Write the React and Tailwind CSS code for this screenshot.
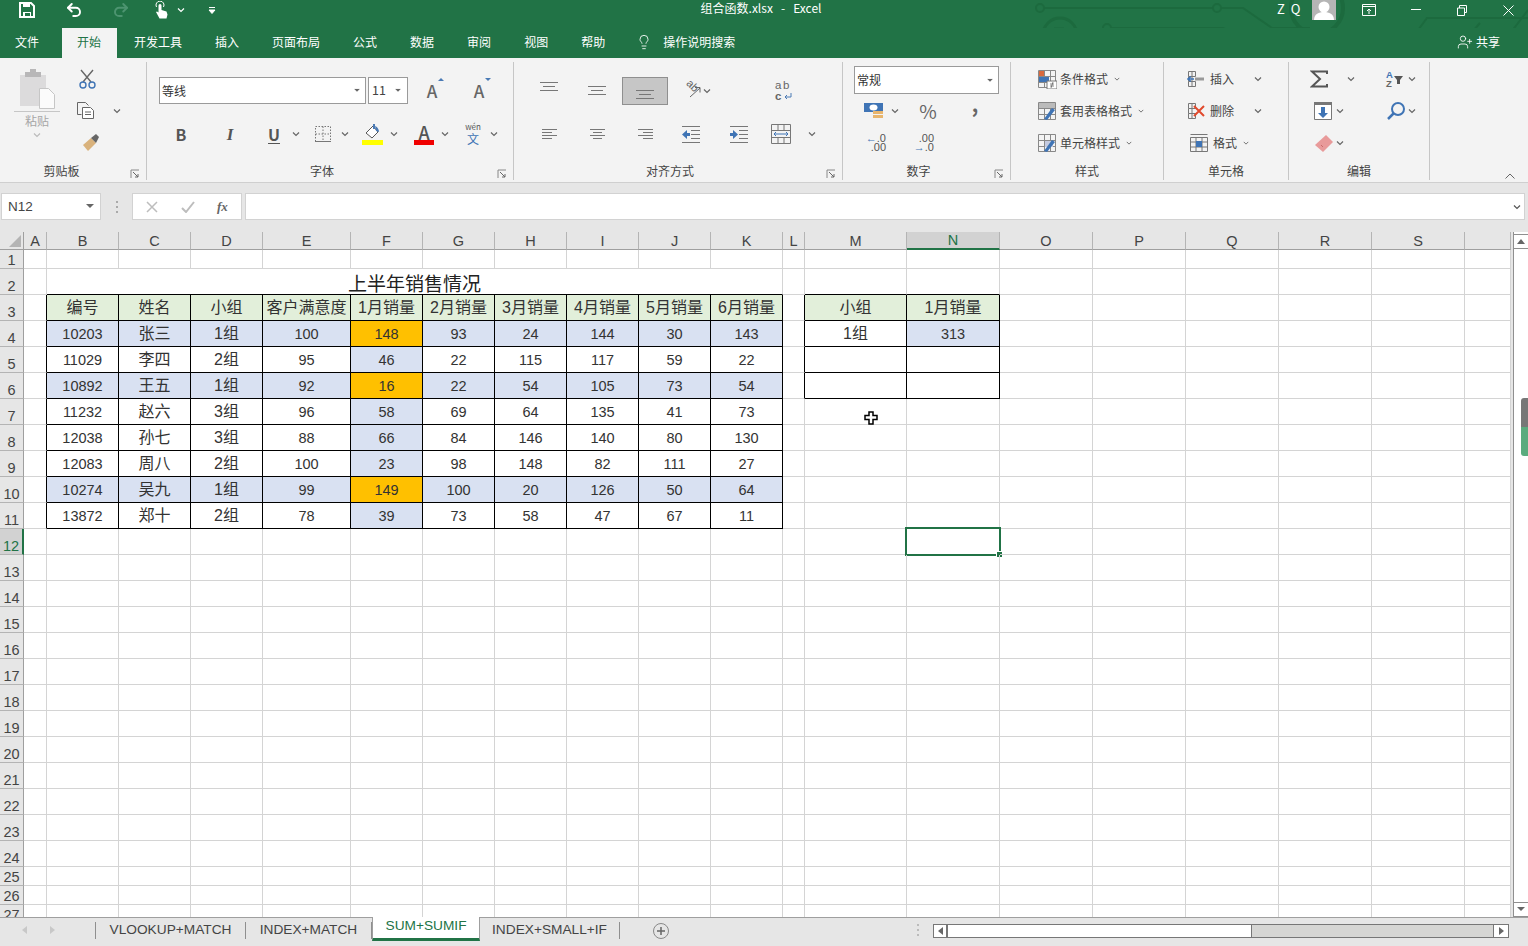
import React from 'react'
import { Undo2, Redo2, Lightbulb, UserPlus } from 'lucide-react'

const S = ({ w = 20, h = 20, className = '', children }) => (
  <svg width={w} height={h} viewBox={`0 0 ${w} ${h}`} fill="none" className={`shrink-0 ${className}`}>
    {children}
  </svg>
)

const Chev = ({ className = '', color = '#666' }) => (
  <S w={8} h={6} className={className}>
    <path d="M1 1.5 4 4.5 7 1.5" stroke={color} strokeWidth="1.2" />
  </S>
)

const Launcher = () => (
  <S w={10} h={10}>
    <path d="M1 9V1h8" stroke="#888" />
    <path d="M3 3l5 5M5 8h3V5" stroke="#666" />
  </S>
)

const Caret = ({ className = '' }) => (
  <S w={8} h={5} className={className}>
    <path d="M0 0h8L4 4z" fill="#666" />
  </S>
)

const Group = ({ width, label, launcher, children }) => (
  <div className="flex flex-col shrink-0 h-[118px] mt-[4px] border-r border-[#c6c6c6]" style={{ width }}>
    <div className="flex-1 min-h-0">{children}</div>
    <div className="flex h-[18px] items-center text-[12px] leading-none text-[#444]">
      <div className="flex-1 text-center">{label}</div>
      {launcher ? (
        <div className="w-[16px] pt-[6px]">
          <Launcher />
        </div>
      ) : null}
    </div>
  </div>
)

const Row32 = ({ children }) => <div className="flex items-center h-[32px]">{children}</div>

const AlignV = ({ y }) => (
  <S w={18} h={28}>
    <path d={`M0 ${y}.5h18M3 ${y + 4}.5h12M0 ${y + 8}.5h18`} stroke="#777" />
  </S>
)

const AlignH = ({ kind }) => {
  const d =
    kind === 'left'
      ? 'M0 1.5h15M0 4.5h10M0 7.5h15M0 10.5h10'
      : kind === 'center'
        ? 'M0 1.5h15M3 4.5h9M0 7.5h15M3 10.5h9'
        : 'M0 1.5h15M5 4.5h10M0 7.5h15M5 10.5h10'
  return (
    <S w={15} h={12}>
      <path d={d} stroke="#777" />
    </S>
  )
}

const TableIcon = ({ children }) => (
  <S w={20} h={20}>
    <path d="M1.5 1.5h17v17h-17zM1.5 7.5h17M1.5 13.5h17M7.5 1.5v17M13.5 1.5v17" stroke="#888" />
    {children}
  </S>
)

const Cuts = () => (
  <S w={18} h={18}>
    <path d="M1.5 1.5h7v5h-7zM1.5 6.5v5h7M1.5 11.5v5h7v-5M5 1.5v15" stroke="#777" />
    <path d="M8 9h9" stroke="#999" strokeWidth="3" />
    <path d="M1 9h6M4 6.500L1 9l3 2.500" stroke="#3f74b5" strokeWidth="1.500" />
  </S>
)

const Circuit = () => (
  <svg width="518" height="58" viewBox="0 0 518 58" fill="none" className="absolute left-[1010px] top-0" stroke="#1c6a3e" strokeWidth="2">
    <path d="M34 8H203M211 8H233L262 28H300" />
    <circle cx="30" cy="8" r="4" />
    <circle cx="207" cy="8" r="4" />
    <path d="M101 28H213L232 37" />
    <circle cx="97" cy="28" r="4" />
    <circle cx="236" cy="37" r="4" />
    <path d="M16 56H123L143 38H232M240 38H262L280 45H397L417 18H518" />
    <circle cx="50" cy="35" r="17" strokeWidth="3" />
    <path d="M44 29h10M44 29v10M44 29l13 13" strokeWidth="3" />
    <circle cx="307" cy="8" r="26" strokeWidth="4" />
    <path d="M482 57L518 10M440 57l30-34" />
  </svg>
)

const TitleBar = () => (
  <div className="relative flex h-[28px] shrink-0 bg-[#217346] text-white">
    <Circuit />
    <div className="relative flex w-full h-[20px] items-center">
      <S w={16} h={16} className="ml-[19px]">
        <path d="M1 1h11l3 3v11H1z" stroke="#fff" strokeWidth="2" />
        <path d="M4 1h7v4H4zM4 10h8v5H4z" fill="#fff" />
        <path d="M6 11h5v3H6z" fill="#217346" />
      </S>
      <Undo2 size={18} strokeWidth={2.6} className="ml-[30px] shrink-0" />
      <Redo2 size={18} strokeWidth={2.6} color="#4d9470" className="ml-[29px] shrink-0" />
      <S w={14} h={18} className="ml-[25px]">
        <path d="M1.500 6a4 4 0 1 1 7 0" stroke="#fff" />
        <path d="M3.500 4.500a1.500 1.500 0 0 1 3 0V9l5 1.500 1 3-1 4H4.500L1 11l1 -.5 1.500 1z" fill="#fff" />
      </S>
      <Chev color="#fff" className="ml-[8px]" />
      <S w={8} h={8} className="ml-[23px]">
        <path d="M1 1.5h6M1 4h6L4 7.5z" stroke="#fff" fill="#fff" strokeWidth="1" />
      </S>
      <div className="ml-[475px] w-[140px] text-center text-[12px] leading-none whitespace-pre pb-[4px]">组合函数.xlsx   -   Excel</div>
      <div className="ml-[446px] text-[13px] tracking-[1.500px] leading-none pb-[4px]">Z Q</div>
      <div className="ml-[10px] w-[24px] h-[20px] bg-[#b5b5b5] overflow-hidden flex justify-center">
        <S w={24} h={20}>
          <circle cx="12" cy="7" r="5.5" fill="#fff" />
          <path d="M2 20c0-6 5-8 10-8s10 2 10 8z" fill="#fff" />
        </S>
      </div>
      <S w={14} h={12} className="ml-[26px]">
        <path d="M.5.5h13v11H.5zM.5 2.5h13" stroke="#fff" />
        <path d="M7 10V5M5 7l2-2 2 2" stroke="#fff" />
      </S>
      <S w={10} h={2} className="ml-[35px]">
        <path d="M0 .5h10" stroke="#fff" />
      </S>
      <S w={10} h={11} className="ml-[36px]">
        <path d="M.5 3h7v7.5h-7zM2.5 3V.5h7v7H7.5" stroke="#fff" />
      </S>
      <S w={11} h={11} className="ml-[36px]">
        <path d="M.5.5l10 10M10.5.5l-10 10" stroke="#fff" />
      </S>
    </div>
  </div>
)

const tabNames = ['开发工具', '插入', '页面布局', '公式', '数据', '审阅', '视图', '帮助']

const TabBar = () => (
  <div className="relative flex h-[30px] shrink-0 items-stretch bg-[#217346] text-white text-[12px]">
    <div className="flex items-center pl-[15px] pr-[21.500px] pb-[2px]">文件</div>
    <div className="flex items-center mx-[1px] px-[15.5px] pb-[2px] bg-[#f3f3f3] text-[#217346]">开始</div>
    {tabNames.map(t => (
      <div key={t} className="flex items-center mx-[1px] px-[15.5px] pb-[2px]">
        {t}
      </div>
    ))}
    <Lightbulb size={16} strokeWidth={1.3} className="ml-[14.500px] self-center shrink-0 mb-[2px]" />
    <div className="flex items-center ml-[11px] pb-[2px]">操作说明搜索</div>
    <div className="flex items-center ml-auto mr-[28px] pb-[2px]">
      <UserPlus size={16} strokeWidth={1.3} className="mr-[3px]" />
      共享
    </div>
  </div>
)

const ClipboardGroup = () => (
  <Group width={147} label={<span className="pr-[7px]">剪贴板</span>} launcher>
    <div className="flex">
      <div className="ml-[14px] mt-[6px] w-[46px] flex flex-col items-center">
        <S w={36} h={41}>
          <path d="M1 7h26v31H1z" fill="#dcdbdc" />
          <path d="M6 4h16v5H6zM11 1h6v4h-6z" fill="#b8b7b8" />
          <path d="M20.5 20.5h9l6 6v14h-15z" fill="#fbfbfb" stroke="#c6c6c6" />
        </S>
        <div className="w-full mt-[2px] border-t border-[#c6c6c6] text-center text-[12px] leading-none pt-[3px] text-[#a6a6a6]">粘贴</div>
        <Chev color="#bbb" className="mt-[5px]" />
      </div>
      <div className="ml-[18px] mt-[1px]">
        <Row32>
          <S w={20} h={20}>
            <path d="M3 1l10 12M15 1L5 13" stroke="#666" strokeWidth="1.4" />
            <circle cx="5" cy="16" r="3" stroke="#3f74b5" strokeWidth="1.4" />
            <circle cx="14" cy="16" r="3" stroke="#3f74b5" strokeWidth="1.4" />
          </S>
        </Row32>
        <Row32>
          <S w={20} h={20} className="-ml-[2px]">
            <path d="M1.5 1.5h8l3 3M1.5 1.5v12h4" stroke="#666" />
            <path d="M6.5 6.5h8l3 3v8h-11z" fill="#fff" stroke="#666" />
            <path d="M9 11h6M9 13.5h6" stroke="#666" />
          </S>
          <Chev className="ml-[17px]" />
        </Row32>
        <Row32>
          <S w={20} h={20} className="ml-[2px]">
            <path d="M3 12l8-7 5 5-8 8z" fill="#d9b27c" />
            <path d="M11 5l5-4 3 3-3 6z" fill="#666" />
          </S>
        </Row32>
      </div>
    </div>
  </Group>
)

const FontGroup = () => (
  <Group width={367} label="字体" launcher>
    <div className="flex items-center h-[27px] mt-[15px] ml-[12px]">
      <div className="flex items-center w-[207px] h-[27px] bg-white border border-[#9a9a9a] px-[2px] text-[12px] text-[#333]">
        <span className="flex-1">等线</span>
        <Caret className="mr-[2px] scale-75" />
      </div>
      <div className="flex items-center w-[40px] h-[27px] ml-[2px] bg-white border border-[#9a9a9a] px-[3px] text-[12.5px] text-[#444]">
        <span className="flex-1">11</span>
        <Caret className="mr-[2px] scale-75" />
      </div>
      <div className="relative ml-[15px] w-[18px] text-center text-[17px] font-medium text-[#666]">
        A<span className="absolute right-[-3px] top-[0px] border-x-[3px] border-b-[3px] border-x-transparent border-b-[#4a7ab5]" />
      </div>
      <div className="relative ml-[29px] w-[18px] text-center text-[17px] font-medium text-[#666]">
        A<span className="absolute right-[-3px] top-[0px] border-x-[3px] border-t-[3px] border-x-transparent border-t-[#4a7ab5]" />
      </div>
    </div>
    <div className="flex items-center h-[32px] mt-[14px] text-[#555]">
      <div className="ml-[24px] w-[20px] text-center text-[16px] font-bold leading-none">B</div>
      <div className="ml-[29px] w-[20px] text-center text-[17px] font-bold italic leading-none font-['Liberation_Serif',serif]">I</div>
      <div className="ml-[24px] w-[20px] text-center text-[16px] font-bold leading-none underline underline-offset-2">U</div>
      <Chev className="ml-[8px]" />
      <S w={20} h={20} className="ml-[13px]">
        <path d="M2.5 2.5h15v15h-15zM10 2.5v15M2.5 10h15" stroke="#777" strokeDasharray="1.5 1.5" />
        <path d="M2 17.5h16" stroke="#777" />
      </S>
      <Chev className="ml-[8px]" />
      <S w={21} h={22} className="ml-[13px]">
        <path d="M4 10l7-7 5 6-6 6z" fill="#fff" stroke="#555" />
        <path d="M11 1h2v5h-2zM13 3c3 1 4 4 4 6l-3-1z" fill="#4a7ab5" />
        <path d="M0 17h21v5H0z" fill="#ffff00" />
      </S>
      <Chev className="ml-[7px]" />
      <div className="ml-[16px] w-[20px] flex flex-col items-center">
        <span className="text-[18px] font-medium leading-[16px] text-[#555]">A</span>
        <span className="w-[20px] h-[5px] bg-[#f00000]" />
      </div>
      <Chev className="ml-[7px]" />
      <div className="ml-[14px] w-[20px] h-[24px] flex flex-col items-center">
        <span className="text-[8px] leading-[10px] text-[#555]">wén</span>
        <span className="text-[12px] leading-[14px] text-[#3f74b5]">文</span>
      </div>
      <Chev className="ml-[7px]" />
    </div>
  </Group>
)

const AlignGroup = () => (
  <Group width={329} label="对齐方式" launcher>
    <div className="flex items-center h-[28px] mt-[15px] ml-[12px]">
      <div className="flex justify-center w-[46px] h-[28px]">
        <AlignV y={5} />
      </div>
      <div className="flex justify-center w-[46px] h-[28px] ml-[2px]">
        <AlignV y={9} />
      </div>
      <div className="flex justify-center w-[46px] h-[28px] ml-[2px] bg-[#c6c6c6] border border-[#8f8f8f]">
        <AlignV y={12} />
      </div>
      <S w={20} h={20} className="ml-[14px] overflow-visible">
        <text x="1" y="10" transform="rotate(45 8 10) translate(-1 -2)" fontSize="11" fill="#666" fontFamily="Liberation Sans">ab</text>
        <path d="M8 16l10-9M13 6.500h5v5" stroke="#666" />
      </S>
      <Chev className="ml-[1px]" />
      <div className="ml-[64px] w-[20px] flex flex-col text-[11.500px] leading-[11px] text-[#666] font-['Liberation_Sans',sans-serif]">
        <span className="tracking-[1.500px]">ab</span>
        <span className="flex items-center font-bold">
          c
          <S w={9} h={7} className="ml-[2px]">
            <path d="M8 0v4H2M4 2L2 4l2 2" stroke="#4a7ab5" />
          </S>
        </span>
      </div>
    </div>
    <div className="flex items-center h-[32px] mt-[13px] ml-[12px]">
      <div className="flex justify-center w-[46px]">
        <AlignH kind="left" />
      </div>
      <div className="flex justify-center w-[46px] ml-[2px]">
        <AlignH kind="center" />
      </div>
      <div className="flex justify-center w-[46px] ml-[2px]">
        <AlignH kind="right" />
      </div>
      <S w={20} h={18} className="ml-[13px]">
        <path d="M1 1.500h18M10 5.500h9M10 9.500h9M10 13.500h9M1 17.500h18" stroke="#777" />
        <path d="M1 9.500L6 5v3h3v3H6v3z" fill="#3f74b5" />
      </S>
      <S w={20} h={18} className="ml-[28px]">
        <path d="M1 1.500h18M10 5.500h9M10 9.500h9M10 13.500h9M1 17.500h18" stroke="#777" />
        <path d="M9 9.500L4 5v3H1v3h3v3z" fill="#3f74b5" />
      </S>
      <S w={20} h={20} className="ml-[22px]">
        <path d="M.5.500h19v19H.5zM.5 6.500h19M.5 13.500h19M7 .5v6M13 .5v6M7 13.500v6M13 13.500v6" stroke="#777" />
        <path d="M3 10h14M5 8l-2 2 2 2M15 8l2 2-2 2" stroke="#3f74b5" />
      </S>
      <Chev className="ml-[17px]" />
    </div>
  </Group>
)

const NumberGroup = () => (
  <Group width={168} label="数字" launcher>
    <div className="flex items-center w-[145px] h-[28px] ml-[11px] mt-[4px] bg-white border border-[#9a9a9a] px-[2px] text-[12px] text-[#333]">
      <span className="flex-1">常规</span>
      <Caret className="mr-[2px] scale-75" />
    </div>
    <div className="mt-[1px]">
      <Row32>
        <S w={20} h={20} className="ml-[21px]">
          <path d="M0 2h19v9H0z" fill="#3f74b5" />
          <ellipse cx="9.500" cy="6.500" rx="4" ry="3" fill="#fff" />
          <path d="M9 10h10v3H9zM9 14h10v3H9z" fill="#e8b56d" />
        </S>
        <Chev className="ml-[7px]" />
        <div className="ml-[19px] w-[20px] text-center text-[19px] leading-none text-[#666] pb-[2px]">%</div>
        <div className="ml-[27px] w-[20px] text-center text-[20px] font-bold leading-none text-[#666] pb-[14px]">,</div>
      </Row32>
      <Row32>
        <div className="ml-[19px] w-[24px] text-[11px] leading-[9px] text-[#555] font-['Liberation_Sans',sans-serif] text-right">
          <div>
            <span className="text-[#3f74b5] font-bold">←</span>.0
          </div>
          <div>.00</div>
        </div>
        <div className="ml-[24px] w-[24px] text-[11px] leading-[9px] text-[#555] font-['Liberation_Sans',sans-serif] text-right">
          <div>.00</div>
          <div>
            <span className="text-[#3f74b5] font-bold">→</span>.0
          </div>
        </div>
      </Row32>
    </div>
  </Group>
)

const StyleItem = ({ label, icon }) => (
  <Row32>
    <div className="ml-[26px] w-[20px]">{icon}</div>
    <span className="ml-[3px] text-[12px] text-[#444]">{label}</span>
    <Chev className="ml-[5px] scale-75" />
  </Row32>
)

const StylesGroup = () => (
  <Group width={153} label="样式">
    <div className="pt-[1px]">
      <StyleItem
        label="条件格式"
        icon={
          <TableIcon>
            <path d="M2 2h5v5H2z" fill="#d9693d" />
            <path d="M2 8h10v5H2z" fill="#3f74b5" />
            <path d="M10 12h10v8H10z" fill="#fff" stroke="#777" />
            <path d="M13 15h4M13 17h4M16 13l-2 6" stroke="#555" strokeWidth=".7" />
          </TableIcon>
        }
      />
      <StyleItem
        label="套用表格格式"
        icon={
          <TableIcon>
            <path d="M2 2h16v5H2z" fill="#bbb" />
            <path d="M7 18l3 1 8-10-3-2z" fill="#3f74b5" />
          </TableIcon>
        }
      />
      <StyleItem
        label="单元格样式"
        icon={
          <TableIcon>
            <path d="M8 8h8v6H8z" fill="#c5cbe0" />
            <path d="M7 18l3 1 8-10-3-2z" fill="#3f74b5" />
          </TableIcon>
        }
      />
    </div>
  </Group>
)

const CellsGroup = () => (
  <Group width={125} label="单元格">
    <div className="pt-[1px] text-[12px] text-[#444]">
      <Row32>
        <div className="ml-[23px]">
          <Cuts />
        </div>
        <span className="ml-[5px]">插入</span>
        <Chev className="ml-[20px]" />
      </Row32>
      <Row32>
        <S w={18} h={18} className="ml-[23px]">
          <path d="M1.500 1.500h7v5h-7zM1.500 6.500v5h7M1.500 11.500v5h7v-5M5 1.500v15" stroke="#777" />
          <path d="M7 4l10 10M17 4L7 14" stroke="#e0492c" strokeWidth="2" />
        </S>
        <span className="ml-[5px]">删除</span>
        <Chev className="ml-[20px]" />
      </Row32>
      <Row32>
        <S w={18} h={20} className="ml-[26px]">
          <path d="M.5 1.500h17M.5 4.500h17v14H.5zM6 4.500v14M12 4.500v14M.5 9h17M.5 14h17" stroke="#777" />
          <path d="M6 8h6v6H6z" fill="#3f74b5" />
        </S>
        <span className="ml-[5px]">格式</span>
        <Chev className="ml-[5px] scale-75" />
      </Row32>
    </div>
  </Group>
)

const EditGroup = () => (
  <Group width={141} label="编辑">
    <div className="pt-[1px]">
      <Row32>
        <S w={20} h={18} className="ml-[21px]">
          <path d="M17 4V1.500H2L10 9l-8 7.500h15V14" stroke="#555" strokeWidth="2" />
        </S>
        <Chev className="ml-[17px]" />
        <div className="ml-[31px] w-[20px] flex items-center">
          <div className="flex flex-col text-[9.500px] leading-[9px] text-[#3f74b5] font-bold font-['Liberation_Sans',sans-serif]">
            <span>A</span>
            <span className="text-[#666]">Z</span>
          </div>
          <S w={9} h={9} className="ml-[1px]">
            <path d="M0 1h9L6 5v4H3V5z" fill="#555" />
          </S>
        </div>
        <Chev className="ml-[2px]" />
      </Row32>
      <Row32>
        <S w={20} h={20} className="ml-[24px]">
          <path d="M1.500 1.500h17v17h-17z" stroke="#777" fill="#fff" />
          <path d="M1 1h18v3H1z" fill="#777" />
          <path d="M8 6h4v6h3l-5 5-5-5h3z" fill="#3f74b5" />
        </S>
        <Chev className="ml-[3px]" />
        <S w={20} h={20} className="ml-[42px]">
          <circle cx="12" cy="8" r="6" stroke="#3f74b5" strokeWidth="2" />
          <path d="M7.500 12.500L2 18" stroke="#3f74b5" strokeWidth="2.500" />
        </S>
        <Chev className="ml-[2px]" />
      </Row32>
      <Row32>
        <S w={20} h={20} className="ml-[25px]">
          <path d="M1 12L12 2l7 7-10 10z" fill="#e89a9a" />
          <path d="M7 12l2 2" stroke="#c86b6b" />
        </S>
        <Chev className="ml-[2px]" />
      </Row32>
    </div>
  </Group>
)

const Ribbon = () => (
  <div className="flex h-[125px] shrink-0 bg-[#f3f3f3] border-b border-[#cfcfcf]">
    <ClipboardGroup />
    <FontGroup />
    <AlignGroup />
    <NumberGroup />
    <StylesGroup />
    <CellsGroup />
    <EditGroup />
    <div className="flex flex-1 justify-end items-end pb-[3px] pr-[13px]">
      <S w={10} h={6}>
        <path d="M.5 5.500L5 1l4.500 4.500" stroke="#666" />
      </S>
    </div>
  </div>
)

const FormulaBar = () => (
  <div className="flex h-[49px] shrink-0 bg-[#e6e6e6] pt-[10px]">
    <div className="flex items-center ml-[1px] w-[100px] h-[27px] bg-white border border-[#d2d2d2] pl-[6px] text-[13.500px] text-[#444] font-['Liberation_Sans',sans-serif]">
      <span className="flex-1 pt-[1px]">N12</span>
      <Caret className="mr-[6px]" />
    </div>
    <div className="flex flex-col justify-center gap-[3px] ml-[15px] w-[2px] h-[27px]">
      <span className="w-[2px] h-[2px] bg-[#aaa]" />
      <span className="w-[2px] h-[2px] bg-[#aaa]" />
      <span className="w-[2px] h-[2px] bg-[#aaa]" />
    </div>
    <div className="flex items-center ml-[14px] w-[110px] h-[27px] bg-white border border-[#d2d2d2]">
      <S w={12} h={12} className="ml-[13px]">
        <path d="M1 1l10 10M11 1L1 11" stroke="#bdbdbd" strokeWidth="1.500" />
      </S>
      <S w={14} h={12} className="ml-[23px]">
        <path d="M1 7l4 4 8-10" stroke="#bdbdbd" strokeWidth="2" />
      </S>
      <span className="ml-[22px] text-[13px] italic font-semibold text-[#666] leading-none font-['Liberation_Serif',serif]">fx</span>
    </div>
    <div className="flex items-center justify-end ml-[3px] w-[1280px] h-[27px] bg-white border border-[#d2d2d2] pr-[3px]">
      <Chev color="#555" />
    </div>
  </div>
)

const cols = ['A', 'B', 'C', 'D', 'E', 'F', 'G', 'H', 'I', 'J', 'K', 'L', 'M', 'N', 'O', 'P', 'Q', 'R', 'S', '']

const sales = [
  [10203, '张三', '1组', 100, 148, 93, 24, 144, 30, 143],
  [11029, '李四', '2组', 95, 46, 22, 115, 117, 59, 22],
  [10892, '王五', '1组', 92, 16, 22, 54, 105, 73, 54],
  [11232, '赵六', '3组', 96, 58, 69, 64, 135, 41, 73],
  [12038, '孙七', '3组', 88, 66, 84, 146, 140, 80, 130],
  [12083, '周八', '2组', 100, 23, 98, 148, 82, 111, 27],
  [10274, '吴九', '1组', 99, 149, 100, 20, 126, 50, 64],
  [13872, '郑十', '2组', 78, 39, 73, 58, 47, 67, 11],
]

const headers = ['编号', '姓名', '小组', '客户满意度', '1月销量', '2月销量', '3月销量', '4月销量', '5月销量', '6月销量']

// column index: 0 = A ... 19 = T, row is the 1-based sheet row
const cellOf = (row, c) => {
  if (row === 3 && c >= 1 && c <= 10) return { text: headers[c - 1], bg: 'bg-[#e2efda]' }
  if (row >= 4 && row <= 11 && c >= 1 && c <= 10) {
    const data = sales[row - 4]
    const stripe = row === 4 || row === 6 || row === 10
    let bg = stripe ? 'bg-[#d9e1f2]' : ''
    if (c === 5) bg = stripe ? 'bg-[#ffc000]' : 'bg-[#d9e1f2]'
    return { text: data[c - 1], bg }
  }
  if (row === 3 && c === 12) return { text: '小组', bg: 'bg-[#e2efda]' }
  if (row === 3 && c === 13) return { text: '1月销量', bg: 'bg-[#e2efda]' }
  if (row === 4 && c === 12) return { text: '1组', bg: '' }
  if (row === 4 && c === 13) return { text: 313, bg: 'bg-[#d9e1f2]' }
  return { text: '', bg: '' }
}

const Cell = ({ row, c }) => {
  const { text, bg } = cellOf(row, c)
  const inMain = row >= 3 && row <= 11
  const inSide = row >= 3 && row <= 6
  const blackRight = (inMain && c <= 10) || (inSide && c >= 11 && c <= 13)
  const blackBottom = (row >= 2 && row <= 11 && c >= 1 && c <= 10) || (row >= 2 && row <= 6 && (c === 12 || c === 13))
  const isNum = typeof text === 'number'
  return (
    <div
      className={`relative flex items-center justify-center min-w-0 border-r border-b whitespace-nowrap text-[#333] ${isNum ? 'text-[14.5px] pt-[3px]' : 'text-[16px] pt-[1px]'} ${blackRight ? 'border-r-black' : 'border-r-[#d4d4d4]'} ${blackBottom ? 'border-b-black' : 'border-b-[#d4d4d4]'} ${bg}`}
    >
      {text}
      {row === 12 && c === 13 ? (
        <div className="absolute -left-[2px] -top-[2px] -right-[2px] -bottom-[2px] border-2 border-[#217346]">
          <span className="absolute -right-[4px] -bottom-[4px] w-[7px] h-[7px] bg-[#217346] border border-white" />
        </div>
      ) : null}
    </div>
  )
}

const rowsList = Array.from({ length: 27 }, (_, i) => i + 1)

const Sheet = () => (
  <div className="flex h-[685px] shrink-0 overflow-hidden bg-[#e6e6e6]">
    <div className="w-[1510px] shrink-0 bg-white font-['Liberation_Sans','Noto_Sans_CJK_SC',sans-serif] grid grid-cols-[24px_23px_72px_72px_72px_88px_72px_72px_72px_72px_72px_72px_22px_102px_93px_93px_93px_93px_93px_93px_46px] grid-rows-[18px_19px_26px_26px_26px_26px_26px_26px_26px_26px_26px_26px_26px_26px_26px_26px_26px_26px_26px_26px_26px_26px_26px_26px_26px_19px_19px_19px]">
      <div className="flex items-end justify-end border-b border-r border-[#9f9f9f] bg-[#e6e6e6] pr-[2px] pb-[2px]">
        <S w={12} h={12}>
          <path d="M12 0v12H0z" fill="#b4b4b4" />
        </S>
      </div>
      {cols.map((c, i) => (
        <div
          key={i}
          className={`flex items-center justify-center text-[14.5px] pt-[2px] border-r border-r-[#b4b4b4] ${c === 'N' ? 'bg-[#d2d2d2] text-[#217346] border-b-2 border-b-[#217346]' : 'bg-[#e6e6e6] text-[#444] border-b border-b-[#9f9f9f]'}`}
        >
          {c}
        </div>
      ))}
      {rowsList.map(r => (
        <React.Fragment key={r}>
          <div
            className={`flex items-end justify-center leading-[15px] text-[14.5px] border-b border-b-[#b4b4b4] ${r === 12 ? 'bg-[#d2d2d2] text-[#217346] border-r-2 border-r-[#217346]' : 'bg-[#e6e6e6] text-[#444] border-r border-r-[#9f9f9f]'}`}
          >
            {r}
          </div>
          {r === 2 ? (
            <>
              <Cell row={2} c={0} />
              <div className="col-span-10 flex items-end justify-center border-r border-b border-r-[#d4d4d4] border-b-black text-[19px] leading-[19px] text-[#222]">上半年销售情况</div>
              {Array.from({ length: 9 }, (_, i) => (
                <Cell key={i} row={2} c={i + 11} />
              ))}
            </>
          ) : (
            cols.map((_, c) => <Cell key={c} row={r} c={c} />)
          )}
        </React.Fragment>
      ))}
    </div>
    <div className="flex flex-col w-[15px] ml-[3px] h-[685px] bg-white border-l border-[#8f8f8f]">
      <div className="flex items-center justify-center h-[15px] mt-[2px] border-y border-[#8f8f8f] bg-white">
        <S w={8} h={5}>
          <path d="M4 0l4 5H0z" fill="#666" />
        </S>
      </div>
      <div className="flex-1 flex flex-col items-end pt-[149px]">
        <div className="w-[7px] h-[29px] bg-[#777] rounded-tl-[3px]" />
        <div className="w-[7px] h-[29px] bg-[#5bab7e] rounded-bl-[3px]" />
      </div>
      <div className="flex items-center justify-center h-[15px] border-y border-[#8f8f8f] bg-white">
        <Caret />
      </div>
    </div>
  </div>
)

const SheetTab = ({ width, active, children }) => (
  <div
    className={`flex justify-center items-center ${active ? 'h-[24px] bg-white text-[#217346] border-x border-[#9f9f9f] border-b-[3px] border-b-[#217346] -mt-px pb-[2px]' : 'h-[17px] mt-[4px] border-r border-[#8f8f8f] text-[#444]'}`}
    style={{ width }}
  >
    {children}
  </div>
)

const BottomBar = () => (
  <div className="flex flex-1 items-start border-t border-[#9f9f9f] bg-[#e6e6e6] text-[13.700px] font-['Liberation_Sans',sans-serif]">
    <div className="flex items-center h-[24px] w-[95px] border-r-0">
      <S w={6} h={8} className="ml-[22px]">
        <path d="M5 0v8L0 4z" fill="#c8c8c8" />
      </S>
      <S w={6} h={8} className="ml-[22px]">
        <path d="M0 0v8l5-4z" fill="#c8c8c8" />
      </S>
    </div>
    <div className="w-px h-[17px] mt-[4px] bg-[#8f8f8f]" />
    <SheetTab width={150}>VLOOKUP+MATCH</SheetTab>
    <SheetTab width={126}>INDEX+MATCH</SheetTab>
    <SheetTab width={108} active>
      SUM+SUMIF
    </SheetTab>
    <SheetTab width={140}>INDEX+SMALL+IF</SheetTab>
    <S w={16} h={16} className="ml-[33px] mt-[5px]">
      <circle cx="8" cy="8" r="7.500" stroke="#888" />
      <path d="M8 4v8M4 8h8" stroke="#666" strokeWidth="1.500" />
    </S>
    <div className="flex flex-col gap-[3px] ml-[248px] mt-[6px]">
      <span className="w-[2px] h-[2px] bg-[#bbb]" />
      <span className="w-[2px] h-[2px] bg-[#bbb]" />
      <span className="w-[2px] h-[2px] bg-[#bbb]" />
    </div>
    <div className="flex h-[14px] ml-[14px] mt-[6px] w-[576px] border border-[#777] bg-[#d6d6d4]">
      <div className="flex items-center justify-center w-[14px] border-r-2 border-[#777] bg-white">
        <S w={5} h={8}>
          <path d="M5 0v8L0 4z" fill="#666" />
        </S>
      </div>
      <div className="w-[304px] bg-white border-r border-[#777]" />
      <div className="flex-1" />
      <div className="flex items-center justify-center w-[15px] border-l border-[#777] bg-white">
        <S w={5} h={8}>
          <path d="M0 0v8l5-4z" fill="#666" />
        </S>
      </div>
    </div>
  </div>
)

export default function App() {
  return (
    <div className="relative flex flex-col w-[1528px] h-[946px] overflow-hidden bg-[#e6e6e6] font-['Noto_Sans_CJK_SC',sans-serif]">
      <TitleBar />
      <TabBar />
      <Ribbon />
      <FormulaBar />
      <Sheet />
      <BottomBar />
      <S w={14} h={14} className="absolute left-[864px] top-[411px]">
        <path d="M5 1h4v3.500h4v4H9V13H5V8.500H1v-4h4z" fill="#fff" stroke="#000" strokeWidth="1.500" />
      </S>
    </div>
  )
}
